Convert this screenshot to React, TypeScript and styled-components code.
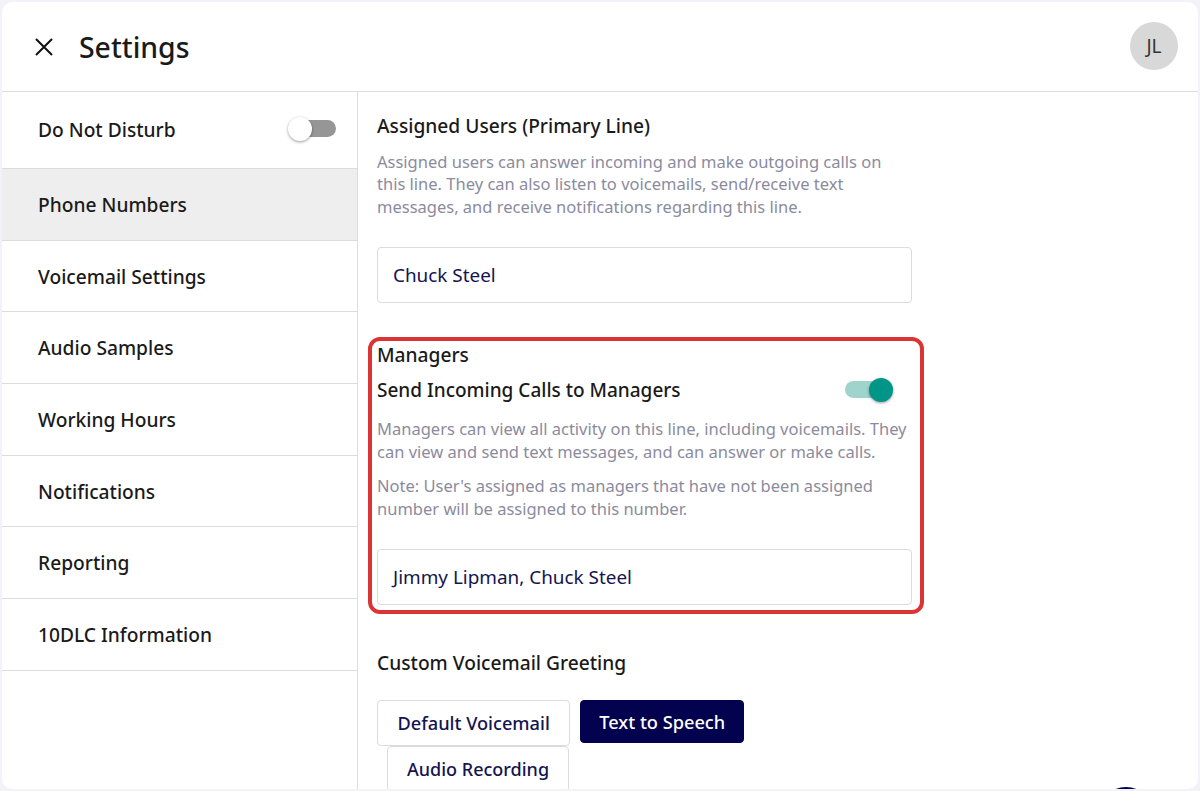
import React from 'react';
import styled, { createGlobalStyle } from 'styled-components';

const GlobalStyle = createGlobalStyle`
    html, body {
        margin: 0;
        padding: 0;
        height: 100%;
        background: #f2f2f8;
        font-family: "Noto Sans", "Open Sans", sans-serif;
    }
`;

const Frame = styled.div`
    box-sizing: border-box;
    width: 1200px;
    height: 791px;
    padding: 2px;
    background: #f2f2f8;
`;

const Card = styled.div`
    position: relative;
    height: 100%;
    display: flex;
    flex-direction: column;
    background: #fff;
    border-radius: 10px;
    overflow: hidden;
`;

const Header = styled.header`
    box-sizing: border-box;
    flex: none;
    height: 90px;
    display: flex;
    align-items: center;
    padding: 0 20px 0 32px;
    border-bottom: 1px solid #dcdcdc;
`;

const CloseIcon = styled.svg`
    width: 20px;
    height: 20px;
    margin-right: 25px;
    stroke: #111;
    stroke-width: 2;
    fill: none;
`;

const Title = styled.h1`
    flex: 1;
    margin: 0;
    font-size: 28.4px;
    font-weight: 500;
    color: #1a1a1a;
`;

const Avatar = styled.div`
    width: 48px;
    height: 48px;
    margin-bottom: 2px;
    border-radius: 50%;
    background: #d8d8d8;
    color: #333;
    font-size: 19px;
    display: flex;
    align-items: center;
    justify-content: center;
`;

const Body = styled.div`
    flex: 1;
    min-height: 0;
    display: flex;
`;

const Sidebar = styled.nav`
    box-sizing: border-box;
    flex: none;
    width: 356px;
    border-right: 1px solid #dcdcdc;
`;

const NavRow = styled.div<{ $active?: boolean; $tall?: boolean }>`
    box-sizing: border-box;
    height: ${p => (p.$tall ? '77px' : '71.7px')};
    display: flex;
    align-items: center;
    justify-content: space-between;
    padding: ${p => (p.$tall ? '0 21px 2px 36px' : '0 21px 0 36px')};
    border-bottom: 1px solid #dcdcdc;
    background: ${p => (p.$active ? '#eeeeee' : '#fff')};
    font-size: 19.2px;
    font-weight: 500;
    color: #1a1a1a;
`;

const SwitchWrap = styled.div`
    position: relative;
    width: 48px;
    height: 24px;
    flex: none;
`;

const Track = styled.div<{ $on?: boolean }>`
    position: absolute;
    left: ${p => (p.$on ? '0' : '2px')};
    right: 0;
    top: 3px;
    height: 17px;
    border-radius: 9px;
    background: ${p => (p.$on ? '#9fd4cd' : '#969696')};
`;

const Knob = styled.div<{ $on?: boolean }>`
    position: absolute;
    top: 0;
    ${p => (p.$on ? 'right: 0;' : 'left: 0;')}
    width: 24px;
    height: 24px;
    border-radius: 50%;
    background: ${p => (p.$on ? '#009687' : '#fff')};
    box-shadow: 0 1px 3px rgba(0, 0, 0, 0.4);
`;

const Content = styled.main`
    flex: 1;
    min-width: 0;
    padding: 21px 0 0 19px;
`;

const Section = styled.section`
    width: 535px;
`;

const Heading = styled.h2`
    margin: 0;
    font-size: 19.2px;
    line-height: 26px;
    font-weight: 500;
    color: #1a1a1a;
`;

const ToggleHeading = styled(Heading)`
    font-size: 19px;
`;

const Help = styled.p`
    margin: 0;
    font-size: 16.5px;
    line-height: 23px;
    color: #8b8b9e;
`;

const AssignedHelp = styled(Help)`
    margin-top: 11.5px;
    width: 520px;
    line-height: 22.7px;
`;

const Field = styled.div`
    box-sizing: border-box;
    height: 56px;
    display: flex;
    align-items: center;
    padding: 0 15px;
    border: 1px solid #dcdcdc;
    border-radius: 4px;
    font-size: 18.9px;
    color: #14144f;
`;

const AssignedField = styled(Field)`
    margin-top: 28.4px;
`;

const Highlight = styled.div`
    box-sizing: border-box;
    width: 556px;
    height: 277px;
    margin: 34px 0 0 -9px;
    padding: 1px 8px 0 5px;
    border: 4px solid #db3434;
    border-radius: 12px;
`;

const ToggleRow = styled.div`
    display: flex;
    align-items: center;
    justify-content: space-between;
    padding-right: 19px;
    margin-top: 9px;
`;

const ManagerHelp = styled(Help)`
    margin-top: 14px;
`;

const NoteHelp = styled(Help)`
    margin-top: 11px;
`;

const ManagerField = styled(Field)`
    margin-top: 29px;
`;

const GreetingHeading = styled(Heading)`
    margin-top: 36px;
`;

const ButtonRow = styled.div`
    width: 380px;
    margin-top: 24px;
    display: flex;
    flex-wrap: wrap;
    align-items: flex-start;
    column-gap: 10px;
`;

const ChoiceButton = styled.button<{ $selected?: boolean; $indent?: boolean }>`
    box-sizing: border-box;
    height: ${p => (p.$selected ? '43px' : '46px')};
    padding: 0 ${p => (p.$selected ? '18px' : p.$indent ? '19px' : '19.5px')};
    margin-left: ${p => (p.$indent ? '10px' : '0')};
    border: 1px solid ${p => (p.$selected ? '#02024f' : '#dcdcdc')};
    border-radius: 4px;
    background: ${p => (p.$selected ? '#02024f' : '#fff')};
    color: ${p => (p.$selected ? '#fff' : '#14144f')};
    font-family: inherit;
    font-size: ${p => (p.$indent ? '18px' : '18.2px')};
    font-weight: 500;
`;

const Fab = styled.div`
    position: absolute;
    right: 44px;
    bottom: -54px;
    width: 56px;
    height: 56px;
    border-radius: 50%;
    background: #02024f;
`;

const Switch: React.FC<{ on?: boolean }> = ({ on }) => (
    <SwitchWrap>
        <Track $on={on} />
        <Knob $on={on} />
    </SwitchWrap>
);

const navItems = [
    'Voicemail Settings',
    'Audio Samples',
    'Working Hours',
    'Notifications',
    'Reporting',
    '10DLC Information',
];

const App: React.FC = () => {
    return (
        <>
            <GlobalStyle />
            <Frame>
                <Card>
                    <Header>
                        <CloseIcon viewBox="0 0 20 20">
                            <path d="M2 2 L18 18 M18 2 L2 18" />
                        </CloseIcon>
                        <Title>Settings</Title>
                        <Avatar>JL</Avatar>
                    </Header>
                    <Body>
                        <Sidebar>
                            <NavRow $tall>
                                Do Not Disturb
                                <Switch />
                            </NavRow>
                            <NavRow $active>Phone Numbers</NavRow>
                            {navItems.map(item => (
                                <NavRow key={item}>{item}</NavRow>
                            ))}
                        </Sidebar>
                        <Content>
                            <Section>
                                <Heading>Assigned Users (Primary Line)</Heading>
                                <AssignedHelp>
                                    Assigned users can answer incoming and make outgoing calls on this line. They can also listen to voicemails, send/receive text messages, and receive notifications regarding this line.
                                </AssignedHelp>
                                <AssignedField>Chuck Steel</AssignedField>
                            </Section>
                            <Highlight>
                                <Heading>Managers</Heading>
                                <ToggleRow>
                                    <ToggleHeading>Send Incoming Calls to Managers</ToggleHeading>
                                    <Switch on />
                                </ToggleRow>
                                <ManagerHelp>
                                    Managers can view all activity on this line, including voicemails. They can view and send text messages, and can answer or make calls.
                                </ManagerHelp>
                                <NoteHelp>
                                    Note: User's assigned as managers that have not been assigned number will be assigned to this number.
                                </NoteHelp>
                                <ManagerField>Jimmy Lipman, Chuck Steel</ManagerField>
                            </Highlight>
                            <Section>
                                <GreetingHeading>Custom Voicemail Greeting</GreetingHeading>
                                <ButtonRow>
                                    <ChoiceButton>Default Voicemail</ChoiceButton>
                                    <ChoiceButton $selected>Text to Speech</ChoiceButton>
                                    <ChoiceButton $indent>Audio Recording</ChoiceButton>
                                </ButtonRow>
                            </Section>
                        </Content>
                    </Body>
                    <Fab />
                </Card>
            </Frame>
        </>
    );
};

export default App;
